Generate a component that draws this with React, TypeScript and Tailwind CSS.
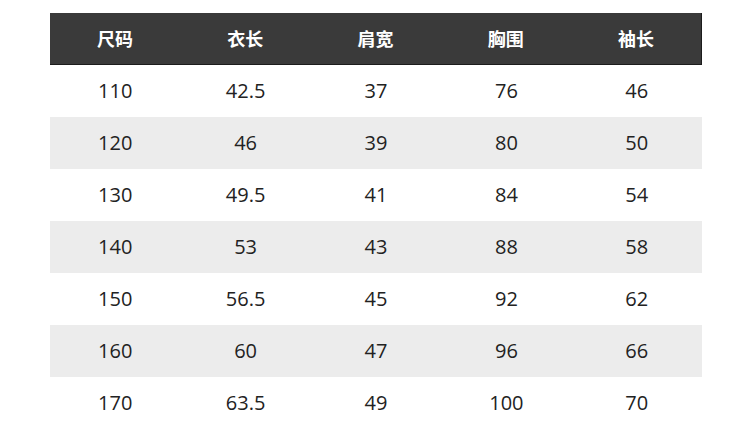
const headers = ['尺码', '衣长', '肩宽', '胸围', '袖长']

const rows = [
  ['110', '42.5', '37', '76', '46'],
  ['120', '46', '39', '80', '50'],
  ['130', '49.5', '41', '84', '54'],
  ['140', '53', '43', '88', '58'],
  ['150', '56.5', '45', '92', '62'],
  ['160', '60', '47', '96', '66'],
  ['170', '63.5', '49', '100', '70'],
]

export default function App() {
  return (
    <div
      className="w-[750px] h-[442px] bg-white pt-[13px] pl-[50px]"
      style={{ fontFamily: '"Open Sans", "Noto Sans CJK SC", sans-serif' }}
    >
      <div className="w-[652px]">
        {/* Header */}
        <div
          className="grid grid-cols-5 h-[52px] bg-[#3a3a3a] border-b border-r border-[#1c1c1c] text-white text-[18px] font-bold"
          style={{ fontFamily: '"Noto Sans CJK SC", sans-serif' }}
        >
          {headers.map((h) => (
            <div key={h} className="flex items-center justify-center">
              {h}
            </div>
          ))}
        </div>

        {/* Rows */}
        {rows.map((row, i) => (
          <div
            key={row[0]}
            className={
              'grid grid-cols-5 h-[52px] text-[20px] text-[#222] ' +
              (i % 2 === 1 ? 'bg-[#ececec]' : 'bg-white')
            }
          >
            {row.map((v, j) => (
              <div key={j} className="flex items-center justify-center">
                {v}
              </div>
            ))}
          </div>
        ))}
      </div>
    </div>
  )
}
